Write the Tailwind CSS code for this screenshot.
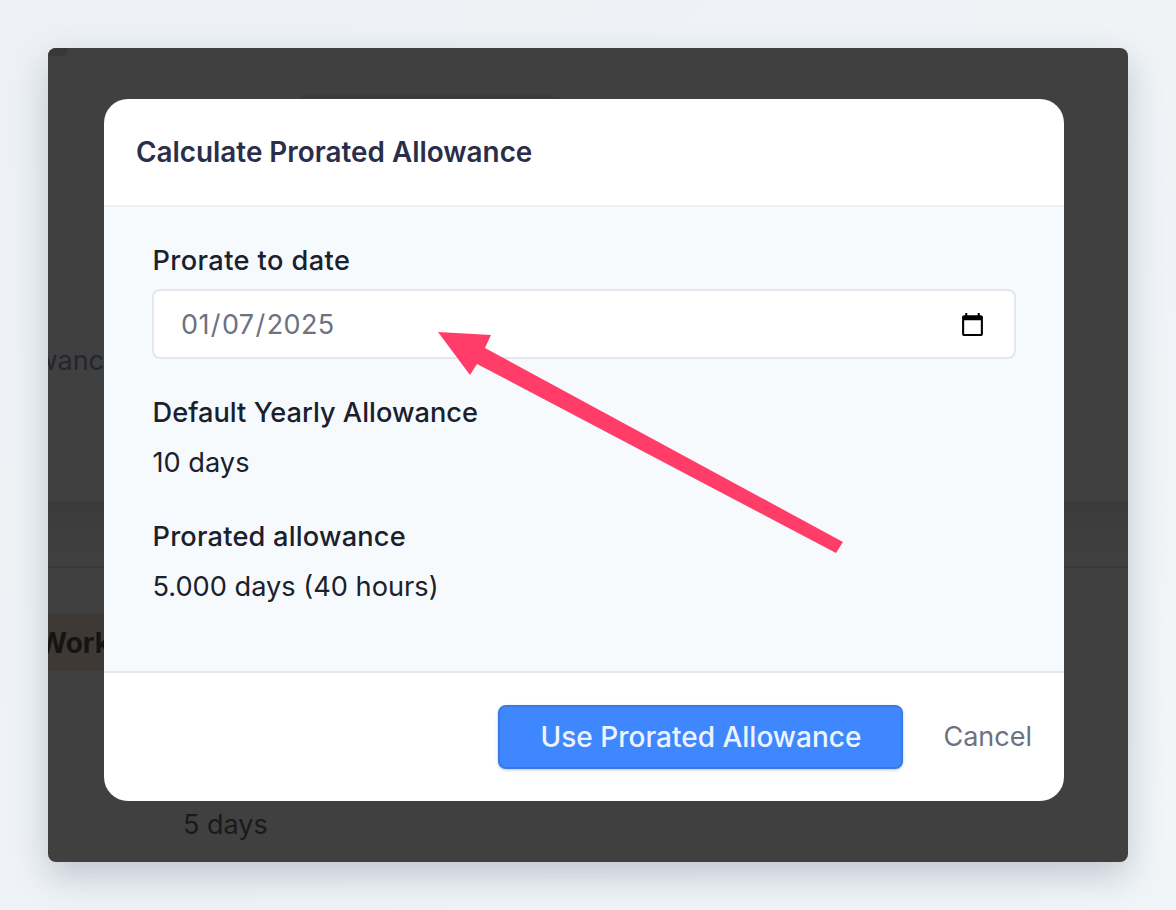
<!doctype html>
<html lang="en-US">
<head>
<meta charset="utf-8">
<script src="https://cdn.jsdelivr.net/npm/@tailwindcss/browser@4"></script>
</head>
<body class="relative m-0 h-[910px] w-[1176px] overflow-hidden bg-[linear-gradient(135deg,#edf1f5,#f1f5f8)] font-['Inter',sans-serif]">
<div class="p-12">
  <div class="relative flex h-[814px] w-[1080px] flex-col overflow-hidden rounded-lg bg-[#404040] text-[27px] text-[#23262b] shadow-[0_14px_34px_rgba(90,105,125,0.32)]">
    <!-- dimmed page behind the dialog -->
    <div class="h-[453px] shrink-0">
      <div class="h-2 w-5 rounded-br-md bg-[#383838]"></div>
      <div class="ml-[252px] mt-[39px] h-8 w-[260px] rounded-t-md bg-[#3c3c3c]"></div>
      <div class="-ml-[60px] mt-[218px] leading-8">Allowance</div>
    </div>
    <div class="h-[67px] shrink-0 border-b-2 border-[#393939] bg-[linear-gradient(#3b3b3b,#404040)]"></div>
    <div class="mt-[45px] flex h-[58px] w-[200px] shrink-0 items-center bg-[#3e3935] pt-[2px] font-bold text-[#141414]">
      <span class="-ml-[10px] text-[28px]">Work</span>
    </div>
    <div class="mt-[138px] shrink-0 pl-[135px] leading-8 text-[#1a1a1a]">5 days</div>

    <!-- dialog -->
    <div class="absolute left-14 top-[51px] flex h-[702px] w-[960px] flex-col overflow-hidden rounded-[24px] bg-white">
      <div class="flex h-[108px] shrink-0 items-center border-b-2 border-[#edf0f4] px-8 pt-[2px]">
        <h2 class="text-[27.85px] font-semibold text-[#2a2e4a]">Calculate Prorated Allowance</h2>
      </div>
      <div class="flex flex-1 flex-col bg-[#f6fafd] pl-[48.5px] pr-12 pt-[38px] text-[#1a202c]">
        <label class="text-[27.2px] font-[450] leading-8 tracking-[0.4px]">Prorate to date</label>
        <input type="date" value="2025-01-07" class="-ml-[0.5px] mt-[12px] h-[70px] w-[864px] rounded-lg border-2 border-[#e4e8ee] bg-white pl-[26px] pr-[26px] pt-[2px] text-[27px] tracking-[0.4px] text-[#6b7280]">
        <div class="mt-[38px] text-[27.2px] font-[450] leading-8 tracking-[0.02px]">Default Yearly Allowance</div>
        <div class="mt-[18px] text-[27.2px] leading-8">10 days</div>
        <div class="mt-[42px] text-[27.2px] font-[450] leading-8 tracking-[0.2px]">Prorated allowance</div>
        <div class="mt-[18px] text-[27.2px] leading-8">5.000 days (40 hours)</div>
      </div>
      <div class="flex h-[130px] shrink-0 items-center justify-end border-t-2 border-[#e4e8ee] pr-8">
        <button class="h-16 w-[405px] rounded-lg border-2 border-[#3a78e8] bg-[#3f87fe] text-[28px] font-medium text-[#eef4ff] shadow-[0_1px_3px_rgba(30,60,120,0.3)]">Use Prorated Allowance</button>
        <button class="ml-10 text-[27px] text-[#6b7280]">Cancel</button>
      </div>
    </div>
  </div>
</div>
<!-- annotation arrow -->
<svg class="absolute left-0 top-0" width="1176" height="910" viewBox="0 0 1176 910" fill="none">
  <polygon fill="#ff3d68" points="438,332 491,335 485,348 843,542 836,553 477,364 470,375"/>
</svg>
</body>
</html>
